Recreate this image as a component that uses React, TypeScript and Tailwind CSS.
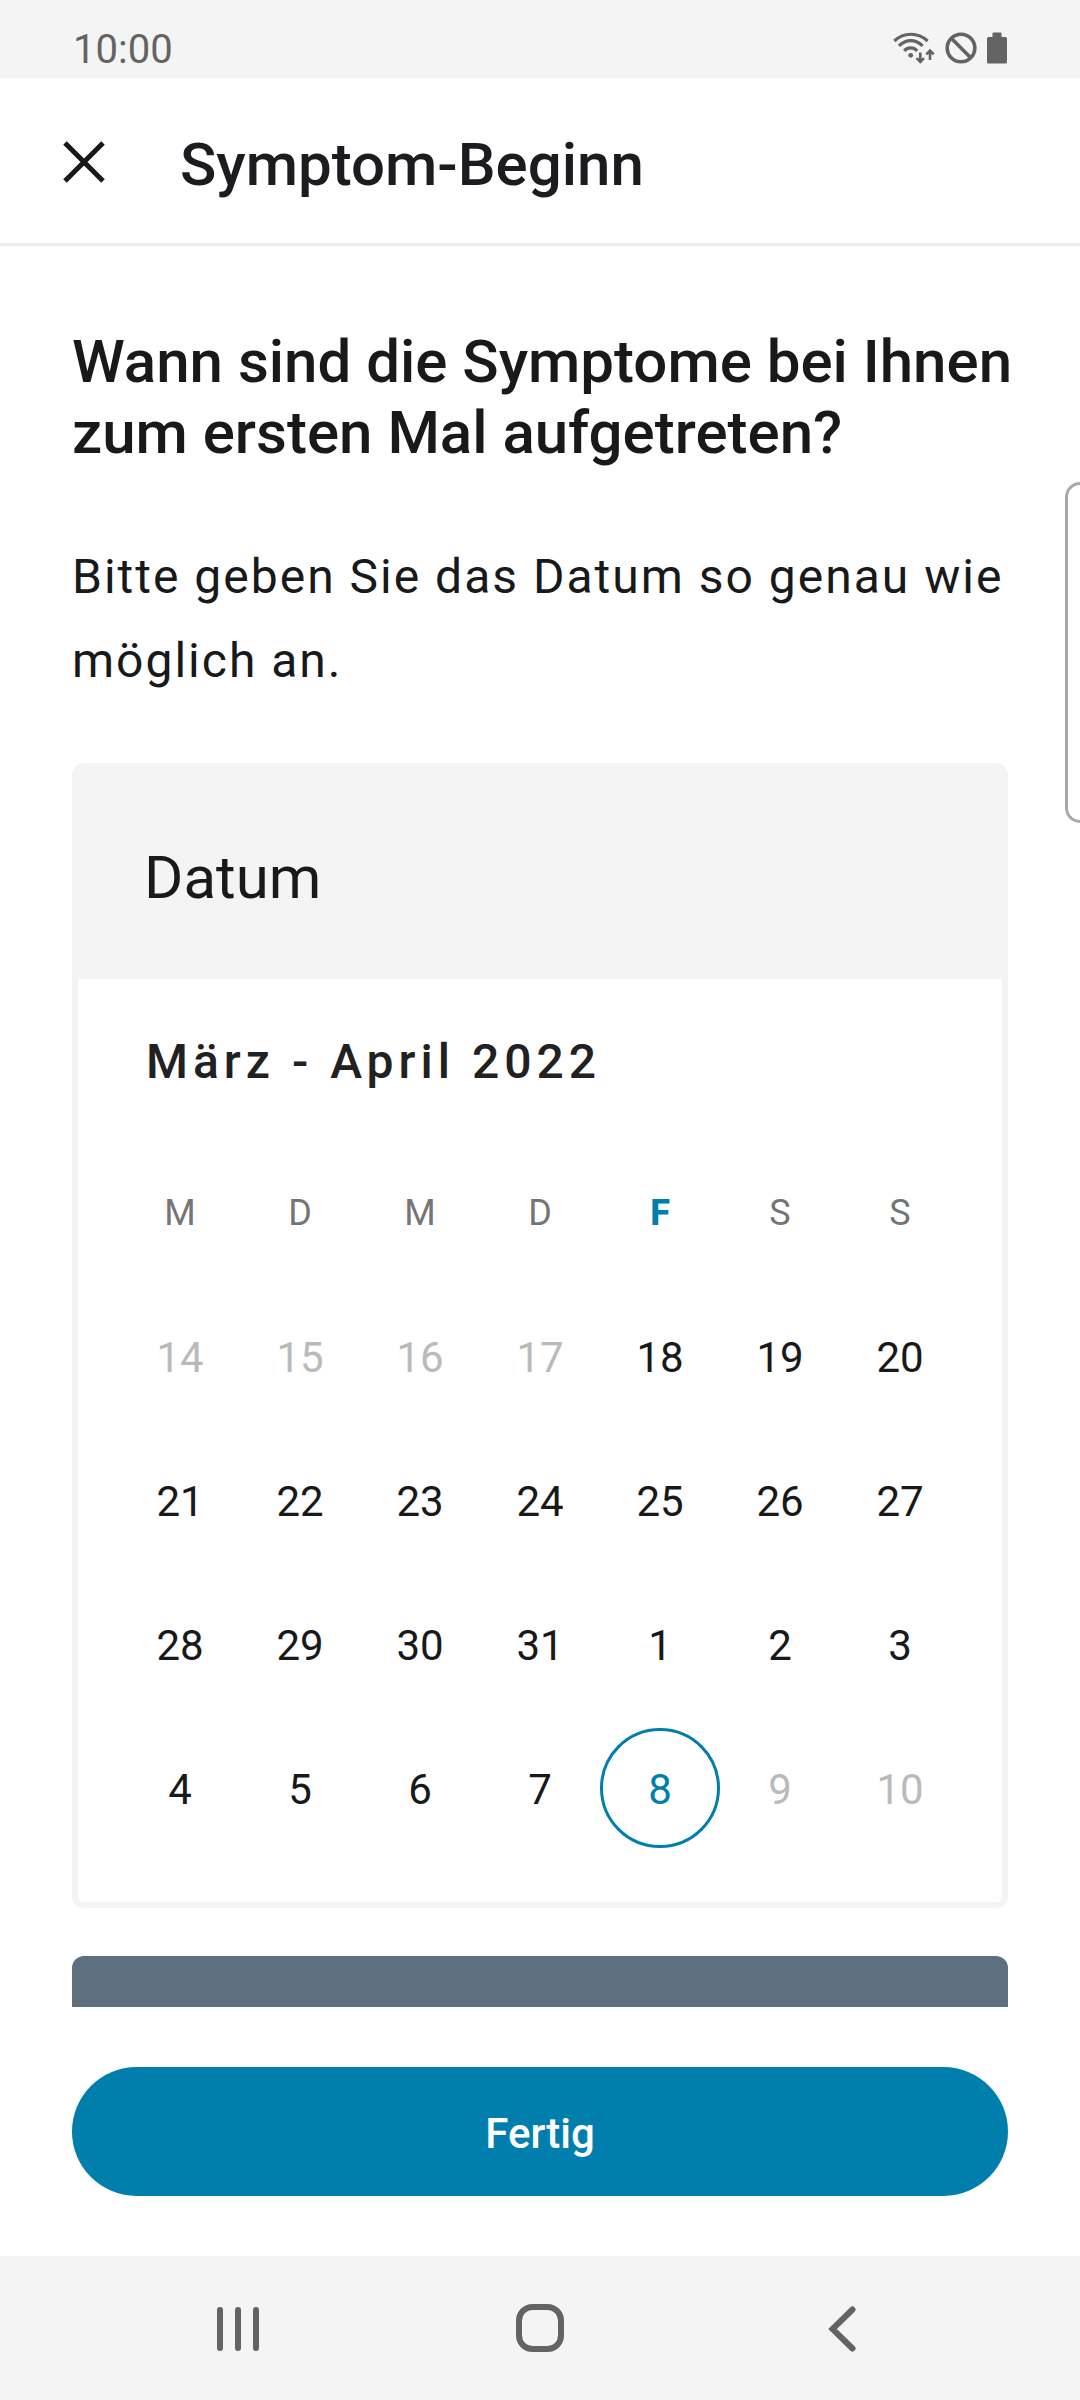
import React from 'react';

type Day = { n: number; off: boolean; today: boolean };

const days: Day[] = [
  14, 15, 16, 17, 18, 19, 20, 21, 22, 23, 24, 25, 26, 27, 28, 29, 30, 31, 1, 2, 3, 4, 5, 6, 7, 8, 9, 10,
].map((n, i) => ({ n, off: i < 4 || i > 25, today: i === 25 }));
const weeks = [0, 1, 2, 3].map((w) => days.slice(w * 7, w * 7 + 7));
const weekdays = ['M', 'D', 'M', 'D', 'F', 'S', 'S'];

function dayClass(d: Day) {
  if (d.today) return 'mx-auto block size-[120px] rounded-full border-[3px] border-[#007fad] pt-[2px] text-[#007fad]';
  if (d.off) return 'mx-auto block size-[120px] pt-[2px] text-[#bababa]';
  return 'mx-auto block size-[120px] pt-[2px]';
}

function StatusBar() {
  return (
    <div className="flex h-[78px] items-center justify-between bg-[#f4f4f4] px-[73px] pt-[18px] text-[#636363]">
      <span className="pt-1 text-[40px] leading-none">10:00</span>
      <div className="flex items-center gap-[10px]">
        <svg width="42" height="32" viewBox="0 0 42 32" fill="none" stroke="currentColor" strokeWidth="3.2">
          <path d="M1.3 9C11 0 24.5 0 34.7 9" />
          <path d="M6 13.8C13 6.8 22.5 6.8 29.6 13.8" />
          <path d="M11.2 18.8C15 15 20.5 15 24.2 18.8" />
          <circle cx="17.7" cy="23.3" r="2.4" fill="currentColor" stroke="none" />
          <path d="M27.3 20.5v9M23.6 26.2l3.7 3.7 3.7-3.7M37 28v-9M33.3 22.3l3.7-3.7 3.7 3.7" strokeWidth="2.6" />
        </svg>
        <svg width="32" height="32" viewBox="0 0 32 32" fill="none" stroke="currentColor" strokeWidth="3.6">
          <circle cx="16" cy="16" r="13.8" />
          <path d="M6.3 6.3l19.4 19.4" />
        </svg>
        <svg width="20" height="32" viewBox="0 0 20 32" fill="currentColor">
          <path d="M6.5 .5h7a1 1 0 0 1 1 1V5h4A1.5 1.5 0 0 1 20 6.500V30a1.500 1.500 0 0 1-1.500 1.500h-17A1.500 1.500 0 0 1 0 30V6.500A1.500 1.500 0 0 1 1.500 5h4V1.500a1 1 0 0 1 1-1z" />
        </svg>
      </div>
    </div>
  );
}

function SystemNav() {
  return (
    <nav className="flex h-[144px] items-center bg-[#f4f4f4] px-[87px] text-[#636363]">
      <button aria-label="Letzte Apps" className="flex flex-1 justify-center">
        <svg width="48" height="48" viewBox="0 0 48 48" fill="none" stroke="currentColor" strokeWidth="6" strokeLinecap="round">
          <path d="M6 6v38M24 6v38M42 6v38" />
        </svg>
      </button>
      <button aria-label="Startbildschirm" className="flex flex-1 justify-center">
        <svg width="48" height="48" viewBox="0 0 48 48" fill="none" stroke="currentColor" strokeWidth="6">
          <rect x="3" y="3" width="42" height="42" rx="13.500" />
        </svg>
      </button>
      <button aria-label="Zurück" className="flex flex-1 justify-center">
        <svg width="48" height="48" viewBox="0 0 48 48" fill="none" stroke="currentColor" strokeWidth="6" strokeLinecap="round">
          <path d="M34.500 5.500L14.500 25l20 19.500" />
        </svg>
      </button>
    </nav>
  );
}

export default function App() {
  return (
    <div className="relative flex min-h-screen flex-col bg-white font-[Roboto,sans-serif] text-[#17191a]">
      <StatusBar />
      <header className="flex h-[168px] items-center border-b-[3px] border-[#ededed] pl-[60px] pt-[3px]">
        <button aria-label="Schließen" className="mr-[72px]">
          <svg width="48" height="48" viewBox="0 0 48 48" fill="none" stroke="currentColor" strokeWidth="5">
            <path d="M5 5l38 38M43 5L5 43" />
          </svg>
        </button>
        <h1 className="pt-[6px] text-[60px] font-medium leading-none text-[#1c1b1f]">Symptom-Beginn</h1>
      </header>
      <main className="flex flex-1 flex-col px-[72px] pt-[80px]">
        <h2 className="-mr-6 text-[60px] font-medium leading-[71px]">
          Wann sind die Symptome bei Ihnen zum ersten Mal aufgetreten?
        </h2>
        <p className="mt-[67px] text-[48px] leading-[84px] tracking-[2px]">
          Bitte geben Sie das Datum so genau wie möglich an.
        </p>
        <section className="mt-[60px] rounded-xl border-[6px] border-[#f4f4f4]">
          <h3 className="flex h-[210px] items-center bg-[#f4f4f4] pl-[66px] pt-2 text-[60px]">Datum</h3>
          <div className="px-[42px] pb-[42px] pt-[53px]">
            <h4 className="pl-[26px] text-[48px] font-medium leading-[60px] tracking-[5px] text-[#212121]">
              März - April 2022
            </h4>
            <table className="mt-[50px] w-full table-fixed text-center">
              <thead>
                <tr className="h-[142px] text-[36px] text-[#757575]">
                  {weekdays.map((d, i) => (
                    <th key={i} scope="col" className={i === 4 ? 'font-extrabold text-[#007fad]' : 'font-normal'}>
                      {d}
                    </th>
                  ))}
                </tr>
              </thead>
              <tbody>
                {weeks.map((week, i) => (
                  <tr key={i} className="h-[144px] text-[42px]">
                    {week.map((d) => (
                      <td key={d.n} className="p-0">
                        <button disabled={d.off} className={dayClass(d)}>
                          {d.n}
                        </button>
                      </td>
                    ))}
                  </tr>
                ))}
              </tbody>
            </table>
          </div>
        </section>
        <div className="mt-12 h-[51px] rounded-t-xl bg-[#5e6f80]" />
      </main>
      <footer className="px-[72px] py-[60px]">
        <button className="h-[129px] w-full rounded-full bg-[#007fad] pt-1 text-[42px] font-medium text-white">
          Fertig
        </button>
      </footer>
      <SystemNav />
      <div className="absolute right-0 top-[482px] h-[341px] w-[15px] rounded-l-[15px] border-[3px] border-r-0 border-[#a9a9a9]" />
    </div>
  );
}
